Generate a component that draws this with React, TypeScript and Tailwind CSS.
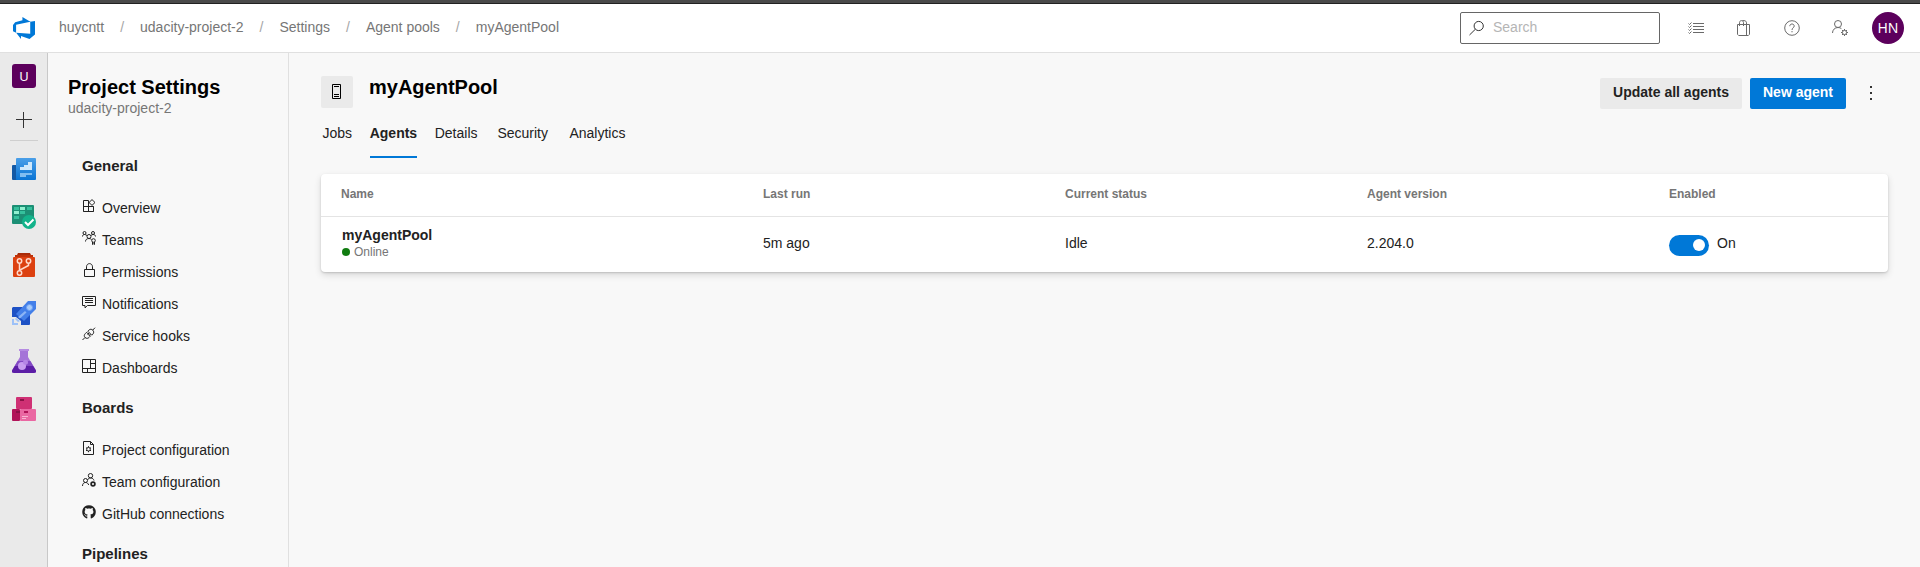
import React from "react";
import { FaGithub } from "react-icons/fa";

type IconProps = { className?: string };

const stroke = {
  fill: "none",
  stroke: "currentColor",
  strokeWidth: 1,
  "aria-hidden": true,
} as const;

function AzureLogo() {
  return (
    <svg viewBox="1 1 14 14" className="size-[22px]" aria-hidden="true">
      <path
        fill="#0078d7"
        d="M15 3.62v8.5L11.5 15l-5.42-1.97v1.95L3.01 10.96l8.95.7V4.01L15 3.62zm-2.98.43L7 1v2L2.38 4.36 1 6.13v4.01l1.97.87V5.86l9.05-1.81z"
      />
    </svg>
  );
}

function SearchIcon({ className }: IconProps) {
  return (
    <svg viewBox="0 0 16 16" className={className} {...stroke}>
      <circle cx="9.7" cy="6" r="4.6" />
      <path d="M6.4 9.2.5 15" />
    </svg>
  );
}

function TaskListIcon() {
  return (
    <svg viewBox="0 0 16 16" className="size-4" {...stroke}>
      <path d="M5 3.5h11M5 6.5h11M5 9.5h11M5 12.5h11" />
      <path d="m.5 3.5 1 1 2-2M.5 6.5l1 1 2-2M.5 9.5l1 1 2-2M.5 12.5l1 1 2-2" />
    </svg>
  );
}

function BagIcon() {
  return (
    <svg viewBox="0 0 16 16" className="size-4" {...stroke}>
      <path d="M1.5 4.5h12v9.8l-1.2 1.2H2.7l-1.2-1.2zM10.5 4.5v11" />
      <path d="M3.5 6V2.6c0-1.2.9-2 2-2s2 .8 2 2V6M6.4.6h1.7c1.3 0 2.4.9 2.4 2.2v1.7" />
    </svg>
  );
}

function HelpIcon() {
  return (
    <svg viewBox="0 0 16 16" className="size-4" {...stroke}>
      <circle cx="8" cy="8" r="7.3" />
      <path d="M5.8 6.2C5.8 4.8 6.7 4 8 4s2.2.8 2.2 2c0 1.8-2.2 1.9-2.2 4M8 11v1.3" />
    </svg>
  );
}

function UserSettingsIcon() {
  return (
    <svg viewBox="0 0 16 16" className="size-4" {...stroke}>
      <circle cx="6" cy="4" r="3.5" />
      <path d="M.5 13c0-3.2 2.4-5.5 5.5-5.5 1.4 0 2.5.4 3.4 1.1" />
      <circle cx="12.5" cy="12.5" r="2.1" />
      <path d="M12.5 9v1.4M12.5 14.6V16M9 12.5h1.4M14.6 12.5H16M10 10l1 1M14 14l1 1M15 10l-1 1M11 14l-1 1" />
    </svg>
  );
}

function PoolIcon() {
  return (
    <svg viewBox="0 0 16 16" className="size-4" {...stroke}>
      <path d="M3.5.5h8v14h-8zM5 2.5h5M5 10.5h5M5 12.5h5" />
    </svg>
  );
}

function OverviewIcon() {
  return (
    <svg viewBox="0 0 14 14" className="size-3.5" {...stroke}>
      <path d="M1.5 1.5h5v11h-5zM1.5 7.5h10v5h-10M11.5 7.5v5" />
      <path d="m10 .6 3 2.9-3 2.9-3-2.9z" />
    </svg>
  );
}

function TeamsIcon() {
  return (
    <svg viewBox="0 0 14 14" className="size-3.5" {...stroke}>
      <circle cx="2.5" cy="2" r="1.5" />
      <circle cx="11" cy="2" r="1.5" />
      <circle cx="7" cy="5.5" r="2" />
      <circle cx="11.5" cy="9.5" r="1.8" />
      <path d="M.5 5.5c0-1.5 1-2 2-2s1.500.5 2.500 1M9 4.500c.6-.6 1.200-1 2-1 1.500 0 2.500.6 2.500 2M3.500 10.500c0-2 1.500-3 3.500-3 1 0 1.700.3 2.500 1M10.500 11v2.500l1-.7 1 .7V11" />
    </svg>
  );
}

function LockIcon() {
  return (
    <svg viewBox="0 0 14 14" className="size-3.5" {...stroke}>
      <path d="M2.5 6.500h10v7h-10zM4.500 6.500V3.800C4.500 2 5.800.6 7.500.6s3 1.400 3 3.200v2.700" />
    </svg>
  );
}

function CommentIcon() {
  return (
    <svg viewBox="0 0 14 14" className="size-3.5" {...stroke}>
      <path d="M.5 1.500h13v9h-8l-2.500 2.300v-2.300H.5zM3 3.500h8M3 5.500h8M3 7.500h8" />
    </svg>
  );
}

function PlugIcon() {
  return (
    <svg viewBox="0 0 14 14" className="size-3.5" {...stroke}>
      <path d="M.5 13 3 10.500M3 10.500c-1.200-1.500-.8-2.800.4-4l1.200-1.200 3.800 3.800-1.200 1.200c-1.200 1.200-2.700 1.500-4.200.2zM5.800 4.200l1-1c1.300-1.200 2.800-1.300 4 0s1.200 2.700 0 4l-1 1zM10.800 3 13 .7M5.500 7.500l1.500-1.500M7 8.700l1.500-1.500" />
    </svg>
  );
}

function DashboardIcon() {
  return (
    <svg viewBox="0 0 14 14" className="size-3.5" {...stroke}>
      <path d="M.5.5h13v13H.5zM8.500.5v9M.5 9.500h13M8.500 4.500h5M5.500 9.500v4" />
    </svg>
  );
}

function FileGearIcon() {
  return (
    <svg viewBox="0 0 14 14" className="size-3.5" {...stroke}>
      <path d="M1.5.5h7l3 3v10h-10zM8.500.5v3h3" />
      <circle cx="6.5" cy="8.2" r="1.8" />
      <path d="M6.5 5.200v1.200M6.500 10v1.200M4 6.700l1 .6M8 9.200l1 .6M9 6.700l-1 .6M5 9.200l-1 .6" />
    </svg>
  );
}

function TeamGearIcon() {
  return (
    <svg viewBox="0 0 14 14" className="size-3.5" {...stroke}>
      <circle cx="8.5" cy="2.7" r="2.2" />
      <circle cx="3.5" cy="7.5" r="2" />
      <path d="M.5 13c0-2.200 1.200-3.500 3-3.500s2.700 1 3.200 2.500M5.500 7c.6-1.300 1.600-2 3-2 2 0 3 1 3.500 2.500" />
      <circle cx="11" cy="11" r="1.9" strokeWidth="1.7" />
    </svg>
  );
}

function OverviewArt() {
  return (
    <svg viewBox="0 0 24 24" className="size-6" aria-hidden="true">
      <defs>
        <linearGradient id="overview-fill" x1="0" y1="0" x2="0" y2="1">
          <stop offset="0" stopColor="#4a9fe8" />
          <stop offset="1" stopColor="#0b74d4" />
        </linearGradient>
      </defs>
      <path d="M1 8h6v15H1a1 1 0 0 1-1-1V9a1 1 0 0 1 1-1z" fill="#1359a5" />
      <rect x="4" y="1" width="20" height="22" rx="1" fill="url(#overview-fill)" />
      <path d="M8 13v-3h4V8h4V5h4v8z" fill="#cfe8fb" />
      <path d="M8 16h12v2H8zM8 18h6v2H8z" fill="#82bdf0" />
    </svg>
  );
}

function BoardsArt() {
  return (
    <svg viewBox="0 0 24 24" className="size-6" aria-hidden="true">
      <rect y="0" width="22" height="19" rx="1" fill="#1c8f75" />
      <path d="M2 2h5v3H2zM15 2h5v3h-5zM8 6h5v3H8zM2 11h5v3H2z" fill="#35c09c" />
      <path d="M8 2h5v3H8zM2 6h5v3H2z" fill="#8ff0cf" />
      <circle cx="17" cy="17" r="7" fill="#13b38b" />
      <path d="m13 17 3 3 5.5-5.5" fill="none" stroke="#fff" strokeWidth="2" />
    </svg>
  );
}

function ReposArt() {
  return (
    <svg viewBox="0 0 24 24" className="size-6" aria-hidden="true">
      <path d="M6 0h12l1 2H5z" fill="#a92b08" />
      <path d="M3 2h18v3H3z" fill="#bf3209" />
      <rect x="1" y="4" width="22" height="20" rx="1" fill="#dc4010" />
      <g fill="none" stroke="#ffd9cb" strokeWidth="1.5">
        <circle cx="7.5" cy="8" r="2.2" />
        <circle cx="16.5" cy="8" r="2.2" />
        <circle cx="7.5" cy="20" r="2.2" />
        <path d="M7.5 10.200v7.600M16.500 10.200v2.300L8 17" />
      </g>
    </svg>
  );
}

function PipelinesArt() {
  return (
    <svg viewBox="0 0 24 24" className="size-6" aria-hidden="true">
      <path d="M1 6h9l8 8v9a1 1 0 0 1-1 1H9v-4l-5-4H0V7z" fill="#1d51c5" />
      <path d="M16 0h8v8L12 20l-8-7z" fill="#437fe9" />
      <circle cx="17.5" cy="6.5" r="3" fill="#a8cbfa" stroke="#6b9ff2" />
      <path d="m6 16 7-6 1.500 1.500-6.500 6z" fill="#8bb4f5" />
      <path d="M0 18h2v4h4v2H0zM4 17l4 3-2 1-3-3z" fill="#9dc1f8" />
    </svg>
  );
}

function TestPlansArt() {
  return (
    <svg viewBox="0 0 24 24" className="size-6" aria-hidden="true">
      <path
        d="M8 2h8v6l8 13.500c.4 1.500-.5 2.500-2 2.500H2c-1.500 0-2.400-1-2-2.500L8 8z"
        fill="#a574d8"
      />
      <path
        d="M2.700 17h18.600l2.700 4.500c.4 1.500-.5 2.500-2 2.500H2c-1.500 0-2.400-1-2-2.500z"
        fill="#5c1ea6"
      />
      <path d="M5.600 12h12.800l2.900 5H2.700z" fill="#8249c4" />
      <rect x="7" width="10" height="2" fill="#b58be2" />
      <circle cx="10" cy="17" r="4" fill="#c79cf0" />
      <circle cx="13.5" cy="13.2" r="2.5" fill="#b585e6" />
    </svg>
  );
}

function ArtifactsArt() {
  return (
    <svg viewBox="0 0 24 24" className="size-6" aria-hidden="true">
      <rect x="4" width="16" height="12" rx="1" fill="#cf3074" />
      <rect y="12" width="8" height="12" rx="1" fill="#b11459" />
      <rect x="8" y="12" width="16" height="12" rx="1" fill="#ea67a2" />
      <path d="M8 2h4v2H8zM4 14h4v2H4z" fill="#8a1247" />
      <path d="M12 14h4v2h-4z" fill="#b11459" />
      <path d="M10 19h6v1h-6zM10 21h4v1h-4z" fill="#f8b4d2" />
    </svg>
  );
}

const crumbs = ["huycntt", "udacity-project-2", "Settings", "Agent pools", "myAgentPool"];

const hubs = [
  { label: "Overview", art: <OverviewArt /> },
  { label: "Boards", art: <BoardsArt /> },
  { label: "Repos", art: <ReposArt /> },
  { label: "Pipelines", art: <PipelinesArt /> },
  { label: "Test Plans", art: <TestPlansArt /> },
  { label: "Artifacts", art: <ArtifactsArt /> },
];

const groups = [
  {
    title: "General",
    items: [
      { label: "Overview", icon: <OverviewIcon /> },
      { label: "Teams", icon: <TeamsIcon /> },
      { label: "Permissions", icon: <LockIcon /> },
      { label: "Notifications", icon: <CommentIcon /> },
      { label: "Service hooks", icon: <PlugIcon /> },
      { label: "Dashboards", icon: <DashboardIcon /> },
    ],
  },
  {
    title: "Boards",
    items: [
      { label: "Project configuration", icon: <FileGearIcon /> },
      { label: "Team configuration", icon: <TeamGearIcon /> },
      { label: "GitHub connections", icon: <FaGithub className="size-3.5" aria-hidden="true" /> },
    ],
  },
  { title: "Pipelines", items: [] },
];

const tabs = ["Jobs", "Agents", "Details", "Security", "Analytics"];

function TopBar() {
  return (
    <header className="flex h-[49px] shrink-0 items-center border-b border-[#e0e0e0] bg-white pr-4 pl-[13px]">
      <a href="#home" aria-label="Azure DevOps" className="mr-6">
        <AzureLogo />
      </a>
      <nav aria-label="Breadcrumb" className="pb-0.5">
        <ol className="flex gap-4 text-[#767676]">
          {crumbs.map((crumb, i) => (
            <React.Fragment key={crumb}>
              {i > 0 && (
                <li aria-hidden="true" className="text-[#a6a6a6]">
                  /
                </li>
              )}
              <li>
                <a href={`#${crumb}`}>{crumb}</a>
              </li>
            </React.Fragment>
          ))}
        </ol>
      </nav>
      <div className="ml-auto flex items-center gap-8 text-[#6a6a6a]">
        <label className="mr-[-4px] flex h-8 w-[200px] items-center gap-2 rounded-xs border border-[#666] px-2 text-[#333]">
          <SearchIcon className="size-4 shrink-0" />
          <input
            type="search"
            aria-label="Search"
            placeholder="Search"
            className="w-full min-w-0 bg-transparent pb-0.5 outline-none placeholder:text-[#b5b5b5]"
          />
        </label>
        <button type="button" aria-label="Work items">
          <TaskListIcon />
        </button>
        <button type="button" aria-label="Marketplace">
          <BagIcon />
        </button>
        <button type="button" aria-label="Help">
          <HelpIcon />
        </button>
        <button type="button" aria-label="User settings">
          <UserSettingsIcon />
        </button>
        <button
          type="button"
          className="-ml-2 size-8 rounded-full bg-[#5c005c] font-['Noto_Sans',sans-serif] text-white"
        >
          HN
        </button>
      </div>
    </header>
  );
}

function HubRail() {
  return (
    <nav
      aria-label="Project hubs"
      className="flex w-12 shrink-0 flex-col items-center border-r border-[#c8c8c8] bg-[#eaeaea] pt-[11px] pl-px"
    >
      <a
        href="#project"
        className="flex size-6 items-center justify-center rounded-[3px] bg-[#5c005c] font-['Noto_Sans',sans-serif] text-[13px] text-white"
      >
        U
      </a>
      <button type="button" aria-label="Add" className="mt-6 mb-3 text-[#333]">
        <svg viewBox="0 0 16 16" className="size-4" {...stroke}>
          <path d="M7.5 0v16M0 7.500h16" />
        </svg>
      </button>
      <hr className="mb-1 w-7 border-[#cfcfcf]" />
      {hubs.map((hub) => (
        <a
          key={hub.label}
          href={`#${hub.label}`}
          aria-label={hub.label}
          className="flex h-12 w-full shrink-0 items-center justify-center"
        >
          {hub.art}
        </a>
      ))}
    </nav>
  );
}

function SettingsNav() {
  return (
    <nav
      aria-label="Project settings"
      className="w-[241px] shrink-0 border-r border-[#e0e0e0] pt-5"
    >
      <h2 className="pl-5 text-xl leading-7 font-bold text-black">Project Settings</h2>
      <p className="pl-5 leading-[14px] text-[#767676]">udacity-project-2</p>
      <div className="pt-[27px] pl-[34px]">
        {groups.map((group) => (
          <section key={group.title}>
            <h3 className="h-[50px] text-[15px] leading-12 font-bold">{group.title}</h3>
            <ul>
              {group.items.map((item) => (
                <li key={item.label}>
                  <a href={`#${item.label}`} className="flex h-8 items-center gap-1.5">
                    <span className="pb-1">{item.icon}</span>
                    {item.label}
                  </a>
                </li>
              ))}
            </ul>
          </section>
        ))}
      </div>
    </nav>
  );
}

function PoolHeader() {
  return (
    <div className="flex items-start gap-2">
      <div className="mt-1 mr-2 flex size-8 items-center justify-center rounded-xs bg-[#eaeaea] text-black">
        <PoolIcon />
      </div>
      <h1 className="mr-auto text-xl leading-[30px] font-bold text-black">myAgentPool</h1>
      <button
        type="button"
        className="mt-1.5 h-[31px] rounded-xs bg-[#eaeaea] px-[13px] pb-1 font-bold"
      >
        Update all agents
      </button>
      <button
        type="button"
        className="mt-1.5 h-[31px] rounded-xs bg-[#0078d7] px-[13px] pb-1 font-bold text-white"
      >
        New agent
      </button>
      <button
        type="button"
        aria-label="More actions"
        className="mt-1.5 flex h-8 w-[34px] items-center justify-center pb-0.5"
      >
        <svg viewBox="0 0 16 16" className="size-4" fill="#333" aria-hidden="true">
          <path d="M7 1h2v2H7zM7 7h2v2H7zM7 13h2v2H7z" />
        </svg>
      </button>
    </div>
  );
}

// Each tab reserves the width of its bold label, so selecting one moves nothing.
function Tabs() {
  return (
    <div role="tablist" className="flex gap-4">
      {tabs.map((tab) => (
        <button
          key={tab}
          type="button"
          role="tab"
          data-label={tab}
          aria-selected={tab === "Agents"}
          className="h-12 border-b-2 border-transparent after:invisible after:block after:h-0 after:overflow-hidden after:font-bold after:content-[attr(data-label)] aria-selected:border-[#0078d7] aria-selected:font-bold"
        >
          {tab}
        </button>
      ))}
    </div>
  );
}

function AgentTable() {
  return (
    <div className="mt-4 overflow-hidden rounded-sm bg-white shadow-[0_3px_7px_rgba(0,0,0,0.13),0_1px_2px_rgba(0,0,0,0.15)]">
      <table className="w-full table-fixed text-left">
        <colgroup>
          <col />
          <col className="w-[302px]" />
          <col className="w-[302px]" />
          <col className="w-[302px]" />
          <col className="w-[219px]" />
        </colgroup>
        <thead className="border-b border-[#e4e4e4] text-xs text-[#767676]">
          <tr className="h-[42px]">
            <th className="pb-0.5 pl-5">Name</th>
            <th className="pb-0.5">Last run</th>
            <th className="pb-0.5">Current status</th>
            <th className="pb-0.5">Agent version</th>
            <th className="pb-0.5">Enabled</th>
          </tr>
        </thead>
        <tbody>
          <tr className="h-14">
            <td className="pb-0.5 pl-[21px]">
              <div className="leading-[18px] font-bold">myAgentPool</div>
              <div className="flex items-center gap-1 text-xs leading-4 text-[#767676]">
                <span className="size-2 rounded-full bg-[#107c10]" />
                Online
              </div>
            </td>
            <td className="pb-0.5">5m ago</td>
            <td className="pb-0.5">Idle</td>
            <td className="pb-0.5">2.204.0</td>
            <td className="pt-0.5">
              <label className="flex items-center gap-2">
                <input
                  type="checkbox"
                  role="switch"
                  defaultChecked
                  className="flex h-[21px] w-10 appearance-none items-center rounded-full bg-[#9a9a9a] px-1 before:size-3 before:rounded-full before:bg-white checked:justify-end checked:bg-[#0078d7]"
                />
                <span className="pb-1">On</span>
              </label>
            </td>
          </tr>
        </tbody>
      </table>
    </div>
  );
}

export default function App() {
  return (
    <div className="flex h-screen flex-col overflow-hidden bg-[#f8f8f8] font-['Liberation_Sans',Arial,sans-serif] text-sm text-[#222]">
      <div className="h-1 shrink-0 border-b border-[#222] bg-[#4a4a4a]" />
      <TopBar />
      <div className="flex min-h-0 flex-1">
        <HubRail />
        <SettingsNav />
        <main className="min-w-0 flex-1 px-8 pt-[19px]">
          <PoolHeader />
          <Tabs />
          <AgentTable />
        </main>
      </div>
    </div>
  );
}
